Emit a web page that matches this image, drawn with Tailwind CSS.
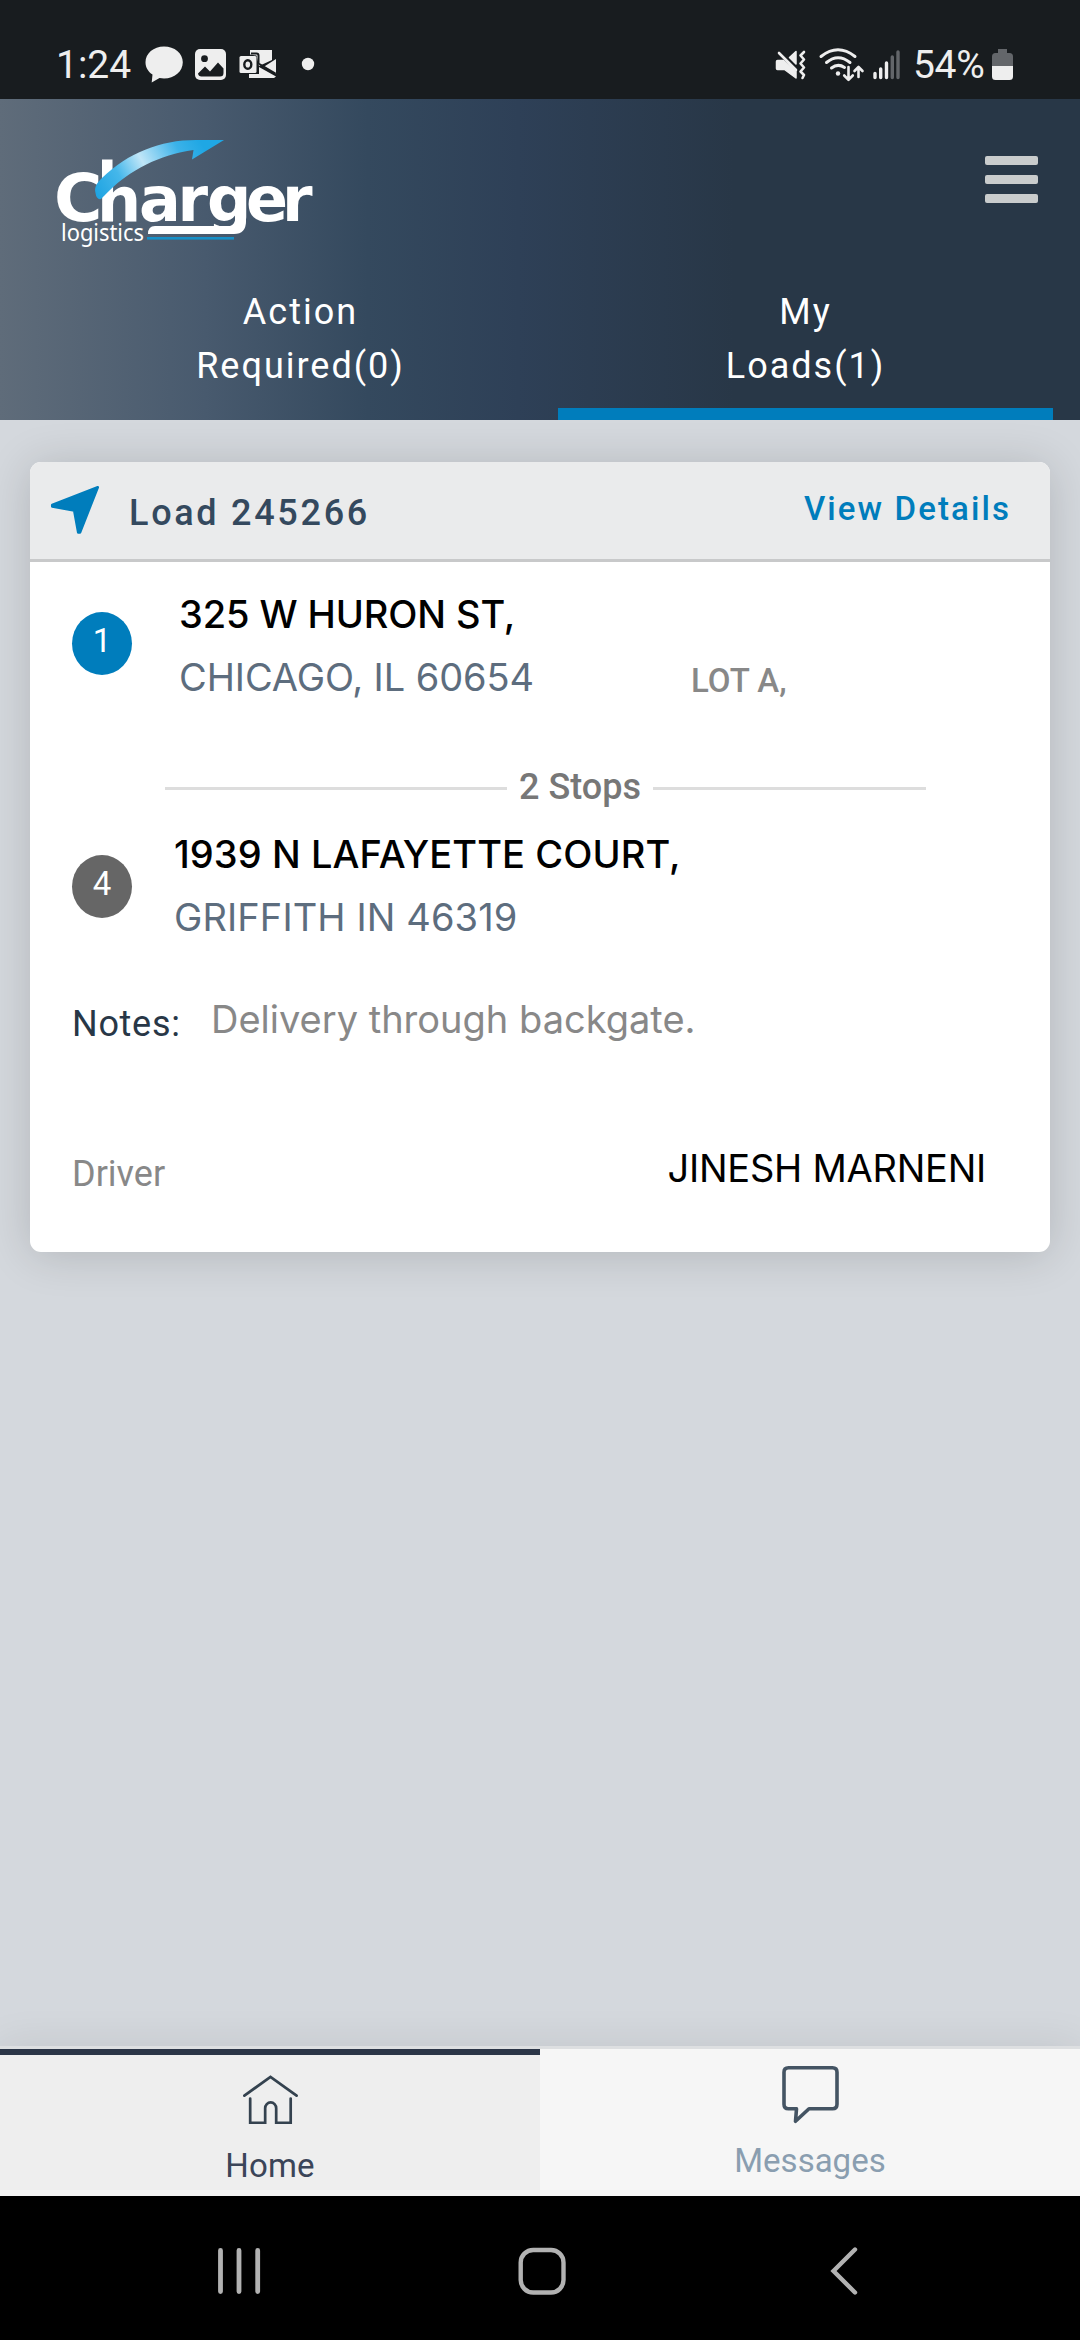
<!DOCTYPE html>
<html lang="en">
<head>
<meta charset="utf-8">
<title>Charger Logistics</title>
<script src="https://cdn.jsdelivr.net/npm/@tailwindcss/browser@4"></script>
</head>
<body class="w-[1080px] h-[2340px] flex flex-col overflow-hidden bg-[#d4d8dd] font-[Roboto,sans-serif]">

  <!-- Status bar -->
  <div class="h-[99px] shrink-0 bg-[#181c1f] flex items-start pt-[40px] text-[#eeeeee]">
    <span class="ml-[56px] w-[84px] text-[39px] leading-[50px]">1:24</span>
    <svg class="w-[180px] h-[50px]" viewBox="140 40 180 50" fill="#eeeeee">
      <path d="M164 46.500c-10.500 0-18.500 7-18.500 15.800 0 5.200 2.700 9.500 7 12.300l-.8 7.900 7.800-4.400c1.500.3 3 .4 4.500.4 10.500 0 18.800-7 18.800-16.200S174.500 46.500 164 46.500z"/>
      <rect x="195" y="49" width="31" height="31" rx="5"/>
      <circle cx="204.500" cy="58.700" r="3.400" fill="#181c1f"/>
      <path d="M198 73.500l7-7 5 5 8-9 5.500 6v4.500a3.500 3.500 0 0 1-3.500 3.500h-18.500a3.500 3.500 0 0 1-3.500-3z" fill="#181c1f"/>
      <path d="M250 50h22v10l-13 6-2.500-10.500-6.500-1z"/>
      <path d="M276 59v14.500L263.500 67zM249 74h10l0-7 17 9.500-2 1.500h-25z"/>
      <rect x="239.500" y="56" width="17" height="17" rx="1.500"/>
      <ellipse cx="247.800" cy="64.500" rx="3.500" ry="4.300" fill="none" stroke="#181c1f" stroke-width="2.400"/>
      <path d="M251 53.500h5.500a2 2 0 0 1 2 2v8l17 10" fill="none" stroke="#181c1f" stroke-width="2"/>
      <circle cx="308" cy="64" r="6.200"/>
    </svg>
    <svg class="ml-[452px] w-[130px] h-[50px]" viewBox="770 40 130 50" fill="none" stroke="#eeeeee" stroke-linecap="round" stroke-linejoin="round">
      <path d="M775.500 60.500h6l12.500 11v6.500l-11.500-8.500h-7q-1 0-1-1v-7q0-1 1-1zM787.500 57.500l6.500-6v12.500z" fill="#eeeeee" stroke-width="1.500"/>
      <path d="M777 53l17 17" stroke-width="2.600"/>
      <path d="M802 52l-3.500 3.500 3.500 4-3.500 4 3.500 4-3.500 4 3.500 3.500-1.500 3" stroke-width="2.600"/>
      <path d="M819 56.500Q836 43 853 56.500M824.500 62.500Q836 53 848 62.500M829.500 68Q836 63 842.500 67.500" stroke-width="3"/>
      <circle cx="836" cy="73.500" r="2.200" fill="#eeeeee" stroke="none"/>
      <path d="M846.500 67v12.500m-4.300-4l4.300 4.300 4.300-4.300M856.500 77V67.500m-4 3.500l4-4 4 4" stroke-width="2.600"/>
      <path d="M873 73.500v4M878.700 69v8.500M884.500 63v14.500" stroke-width="3.400"/>
      <path d="M890.300 57v20.500M896 52v25.500" stroke="#63666a" stroke-width="3.400"/>
    </svg>
    <span class="ml-[11px] w-[73px] text-[39px] leading-[50px] tracking-[-0.300px]">54%</span>
    <svg class="ml-[3px] w-[30px] h-[50px]" viewBox="988 40 30 50">
      <path d="M997 49h9v4h2.500a3.500 3.500 0 0 1 3.500 3.500V66h-21v-9.500a3.500 3.500 0 0 1 3.500-3.500h2.500z" fill="#63666a"/>
      <path d="M991 66h21v10.500a3.500 3.500 0 0 1-3.500 3.500h-14a3.500 3.500 0 0 1-3.500-3.500z" fill="#eeeeee"/>
    </svg>
  </div>

  <!-- App header -->
  <header class="h-[321px] shrink-0 flex flex-col justify-between bg-[linear-gradient(90deg,#5f6c7a_0%,#485a6e_19%,#34495e_34%,#2e4057_48%,#283747_68%,#283747_100%)]">
    <div class="flex justify-between">
      <svg class="ml-[50px] mt-[31px] w-[280px] h-[120px]" viewBox="50 130 280 120">
        <defs>
          <linearGradient id="swoosh" gradientUnits="userSpaceOnUse" x1="97" y1="196" x2="200" y2="140">
            <stop offset="0" stop-color="#1fa4e2"/><stop offset=".25" stop-color="#45b7ea"/>
            <stop offset=".48" stop-color="#c0e6f8"/><stop offset=".8" stop-color="#3bb2e9"/><stop offset="1" stop-color="#1fa7e4"/>
          </linearGradient>
        </defs>
        <rect x="102" y="159.500" width="10.500" height="30" fill="#fff"/>
        <text x="54 97 139 177.500 207 246 282" y="221" font-family="DejaVu Sans" font-weight="700" font-size="62" fill="#fff"><tspan font-size="66">C</tspan>harger</text>
        <path d="M95.500 193C94 187 97 183 102 178C128 153 160 140 196 140H224L192 159.500L193.500 150C160 154 128 172 110 190C106 194 103 197 101 199Q96.500 200 95.500 193Z" fill="url(#swoosh)"/>
        <path d="M246 215v6q0 13-12 13h-86q0-8 7-8h75q5 0 5-5v-6z" fill="#fff"/>
        <rect x="147" y="237" width="87" height="2.600" fill="#1690c8"/>
        <text x="61" y="241" font-family="Noto Sans" font-size="23.500" fill="#fff" textLength="83" lengthAdjust="spacingAndGlyphs">logistics</text>
      </svg>
      <button class="mt-[57px] mr-[42px] w-[53px] h-[47px] flex flex-col justify-between" aria-label="Menu">
        <span class="h-[9px] w-full rounded-[2px] bg-[#c9cccd]"></span>
        <span class="h-[9px] w-full rounded-[2px] bg-[#c9cccd]"></span>
        <span class="h-[9px] w-full rounded-[2px] bg-[#c9cccd]"></span>
      </button>
    </div>
    <nav class="h-[135px] pl-[53px] flex gap-[10px] text-white text-[36px] leading-[54px] tracking-[2px] text-center">
      <div class="w-[495px]">Action<br>Required(0)</div>
      <div class="w-[495px] border-b-12 border-[#007dbc]">My<br>Loads(1)</div>
    </nav>
  </header>

  <!-- Load card -->
  <main class="flex-1 pt-[42px] px-[30px]">
    <section class="h-[790px] rounded-[11px] overflow-hidden bg-white shadow-[0_3px_45px_rgba(0,0,0,0.16)]">
      <div class="h-[100px] bg-[#eaebec] border-b-3 border-[#c8c9ca] flex">
        <svg class="ml-[20px] mt-[23px] w-[50px] h-[50px]" viewBox="50 485 50 50" fill="#007dbc" stroke="#007dbc" stroke-width="2.500" stroke-linejoin="round">
          <path d="M97.800 487.200L80 532.500h-1.800L74.200 510.500 52.200 506.500v-1.500z"/>
        </svg>
        <h2 class="ml-[29px] pt-[24px] text-[36px] leading-[54px] font-medium tracking-[2.700px] text-[#34495e]">Load 245266</h2>
        <a class="ml-auto mr-[39px] pt-[20px] text-[33px] leading-[54px] font-medium tracking-[2.100px] text-[#007dbc]">View Details</a>
      </div>

      <div class="flex">
        <div class="ml-[42px] mt-[50px] w-[60px] h-[63px] rounded-[50%] bg-[#007dbc] text-white text-[33px] leading-[57px] text-center">1</div>
        <div class="ml-[47px] pt-[21px] font-[Inter,sans-serif] text-[38px] leading-[63px]">
          <div class="font-medium text-black tracking-[-0.100px]">325 W HURON ST,</div>
          <div class="h-[63px] flex">
            <span class="w-[512px] tracking-[-0.100px] text-[#5d6d7e]">CHICAGO, IL 60654</span>
            <span class="font-[Roboto,sans-serif] font-medium text-[33px] leading-[69px] text-[#888888]">LOT A,</span>
          </div>
        </div>
      </div>

      <div class="mt-[51px] ml-[135px] w-[761px] flex items-center gap-[12px] text-[36px] leading-[54px] font-medium text-[#777777]">
        <span class="mt-[3px] w-[342px] h-[3px] bg-[#dddddd]"></span>
        <span>2 Stops</span>
        <span class="mt-[3px] flex-1 h-[3px] bg-[#dddddd]"></span>
      </div>

      <div class="mt-[8px] flex">
        <div class="ml-[42px] mt-[33px] w-[60px] h-[63px] rounded-[50%] bg-[#666666] text-white text-[33px] leading-[57px] text-center">4</div>
        <div class="ml-[42px] pt-[1px] font-[Inter,sans-serif] text-[38px] leading-[63px]">
          <div class="font-medium text-black tracking-[0.080px]">1939 N LAFAYETTE COURT,</div>
          <div class="tracking-[0.100px] text-[#5d6d7e]">GRIFFITH IN 46319</div>
        </div>
      </div>

      <div class="mt-[43px] ml-[42px] flex leading-[54px]">
        <span class="w-[139px] pt-[5px] text-[36px] tracking-[0.700px] text-[#283747]">Notes:</span>
        <span class="font-[Inter,sans-serif] text-[38px] text-[#888888]">Delivery through backgate.</span>
      </div>

      <div class="mt-[90px] ml-[42px] mr-[64px] flex justify-between leading-[54px]">
        <span class="pt-[6px] text-[36px] text-[#888888]">Driver</span>
        <span class="font-[Inter,sans-serif] text-[38px] tracking-[-0.250px] text-black">JINESH MARNENI</span>
      </div>
    </section>
  </main>

  <!-- Bottom tabs -->
  <nav class="h-[150px] shrink-0 flex bg-[#f6f6f6] border-t-3 border-[#dddfe1] shadow-[0_0_40px_rgba(0,0,0,0.09)] text-[33px] leading-[48px]">
    <div class="w-[540px] h-[141px] bg-[#eeeeee] border-t-6 border-[#2b3547] flex flex-col items-center text-[#3b4558]">
      <svg class="mt-[17px] w-[60px] h-[60px]" viewBox="240 2072 60 60" fill="none" stroke="#34424f" stroke-width="2.800" stroke-linecap="round">
        <path d="M243.500 2096.500l27-19.500 27 19.500M249.500 2099.500v25h15.500v-15a5.700 6 0 0 1 11.400 0v15h15v-25"/>
      </svg>
      <span class="mt-[12px] tracking-[0.200px]">Home</span>
    </div>
    <div class="w-[540px] flex flex-col items-center text-[#8a9eb0]">
      <svg class="mt-[14px] w-[60px] h-[62px]" viewBox="780 2063 60 62" fill="none" stroke="#445463" stroke-width="3.600" stroke-linejoin="round">
        <path d="M788.500 2067.800h44q4.500 0 4.500 4.500v32q0 4.500-4.500 4.500H809l-13.500 12.500 1-12.500h-8q-4.500 0-4.500-4.500v-32q0-4.500 4.500-4.500z"/>
      </svg>
      <span class="mt-[12px]">Messages</span>
    </div>
  </nav>

  <!-- System navigation -->
  <div class="h-[144px] shrink-0 bg-black flex justify-between items-center pt-[6px] pl-[209px] pr-[205px]">
    <svg class="w-[60px] h-[60px]" viewBox="209 2241 60 60" stroke="#b2b2b2" stroke-width="4.800" stroke-linecap="round"><path d="M220.500 2250.500v41M239 2250.500v41M257.700 2250.500v41"/></svg>
    <svg class="w-[60px] h-[60px]" viewBox="511 2241 60 60" fill="none" stroke="#b2b2b2" stroke-width="4.400"><rect x="519.700" y="2250" width="42.800" height="42.500" rx="12.500"/></svg>
    <svg class="w-[60px] h-[60px]" viewBox="815 2241 60 60" fill="none" stroke="#b2b2b2" stroke-width="4.400" stroke-linecap="round"><path d="M855 2249.500L833.500 2271 855 2292.500"/></svg>
  </div>
</body>
</html>
